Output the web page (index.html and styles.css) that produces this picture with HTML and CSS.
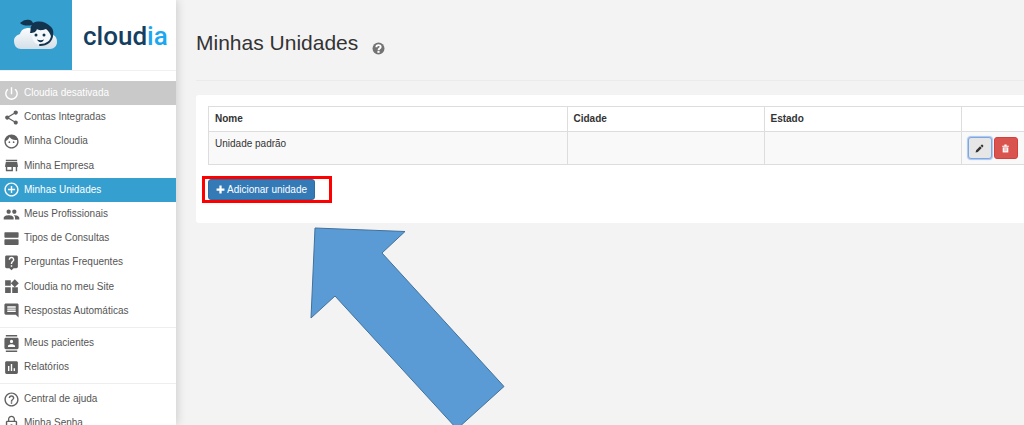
FILE: index.html
```
<!DOCTYPE html>
<html lang="pt-BR">
<head>
  <meta charset="UTF-8" />
  <meta name="viewport" content="width=device-width, initial-scale=1.0" />
  <title>Minhas Unidades</title>
  <link rel="stylesheet" href="styles.css">
</head>
<body>
  <aside class="sidebar">
    <a class="brand" href="#">
      <span class="brand-icon">
        <svg viewBox="0 0 72 72" aria-hidden="true">
          <defs>
            <linearGradient id="cloud" x1="0" y1="0" x2="0" y2="1">
              <stop offset="0" stop-color="#fff" />
              <stop offset="1" stop-color="#d3dfe8" />
            </linearGradient>
          </defs>
          <path fill="url(#cloud)" d="M21 49c-4 0-7-3-7-8 0-4 3-6 6-7 1-4 4-6 9-6 2 0 4 1 5 2 2-3 6-4 9-4 6 0 10 4 10 9 3 1 4 4 4 7 0 4-3 7-7 7z" />
          <path fill="#f4f8fb" d="M32 31l14-4 5 6c1 7-3 12-10 12-6 0-10-5-9-14z" />
          <path fill="#12344f" d="M30 33c1-3 0-6 2-8-4 1-9 1-12-2 2-1 3-3 6-3 3-1 6 0 7 3 6-3 13-1 17 3 4 3 4 8 2 12-2-4-3-7-6-9-5 2-8 1-9 0-1 3-3 4-7 4z" />
          <path fill="none" stroke="#12344f" stroke-width="2" stroke-linecap="round" d="M52 35c0 6-5 10-12 10" />
          <circle cx="36" cy="35" r="1.500" fill="#12344f" />
          <circle cx="44" cy="35" r="1.500" fill="#12344f" />
          <path fill="#12344f" d="M37 39.500c2 1 5 1 7 0-1 3-5 4-7 0z" />
        </svg>
      </span>
      <span class="brand-name">cloud<span class="brand-ia">ia</span></span>
    </a>

    <nav>
      <ul class="menu menu-main">
        <li><a class="off" href="#">
          <svg viewBox="0 0 24 24"><path d="M13 3h-2v10h2V3zm4.830 2.170l-1.420 1.420C17.990 7.860 19 9.810 19 12c0 3.870-3.130 7-7 7s-7-3.130-7-7c0-2.190 1.010-4.140 2.580-5.420L6.170 5.170C4.230 6.820 3 9.260 3 12c0 4.970 4.030 9 9 9s9-4.030 9-9c0-2.740-1.230-5.180-3.170-6.830z" /></svg>
          Cloudia desativada</a></li>
        <li><a href="#">
          <svg viewBox="0 0 24 24"><path d="M18 16.080c-.76 0-1.440.3-1.960.77L8.910 12.700c.05-.23.09-.46.09-.7s-.04-.47-.09-.7l7.050-4.110c.54.5 1.250.81 2.040.81 1.660 0 3-1.340 3-3s-1.340-3-3-3-3 1.340-3 3c0 .24.04.47.09.7L8.040 9.810C7.500 9.310 6.790 9 6 9c-1.660 0-3 1.340-3 3s1.340 3 3 3c.79 0 1.500-.31 2.040-.81l7.120 4.160c-.05.21-.08.43-.08.65 0 1.610 1.310 2.920 2.920 2.920s2.920-1.310 2.920-2.920-1.310-2.920-2.920-2.920z" /></svg>
          Contas Integradas</a></li>
        <li><a href="#">
          <svg viewBox="0 0 24 24"><path d="M9 11.750c-.69 0-1.250.56-1.250 1.250s.56 1.250 1.250 1.250 1.250-.56 1.250-1.250-.56-1.250-1.250-1.250zm6 0c-.69 0-1.250.56-1.250 1.250s.56 1.250 1.250 1.250 1.250-.56 1.250-1.250-.56-1.250-1.250-1.250zM12 2C6.480 2 2 6.480 2 12s4.480 10 10 10 10-4.480 10-10S17.520 2 12 2zm0 18c-4.410 0-8-3.590-8-8 0-.29.02-.58.05-.86 2.360-1.050 4.230-2.980 5.210-5.370C11.070 8.330 14.050 10 17.420 10c.78 0 1.530-.09 2.250-.26.21.71.33 1.470.33 2.260 0 4.410-3.590 8-8 8z" /></svg>
          Minha Cloudia</a></li>
        <li><a href="#">
          <svg viewBox="0 0 24 24"><path d="M20 4H4v2h16V4zm1 10v-2l-1-5H4l-1 5v2h1v6h10v-6h4v6h2v-6h1zm-9 4H6v-4h6v4z" /></svg>
          Minha Empresa</a></li>
        <li><a class="active" href="#">
          <svg viewBox="0 0 24 24"><path d="M13 7h-2v4H7v2h4v4h2v-4h4v-2h-4V7zm-1-5C6.480 2 2 6.480 2 12s4.480 10 10 10 10-4.480 10-10S17.520 2 12 2zm0 18c-4.410 0-8-3.590-8-8s3.590-8 8-8 8 3.590 8 8-3.590 8-8 8z" /></svg>
          Minhas Unidades</a></li>
        <li><a href="#">
          <svg viewBox="0 0 24 24"><path d="M16 11c1.660 0 2.990-1.340 2.990-3S17.660 5 16 5c-1.660 0-3 1.340-3 3s1.340 3 3 3zm-8 0c1.660 0 2.990-1.340 2.990-3S9.660 5 8 5C6.340 5 5 6.340 5 8s1.340 3 3 3zm0 2c-2.330 0-7 1.170-7 3.500V19h14v-2.500c0-2.330-4.670-3.500-7-3.500zm8 0c-.29 0-.62.02-.97.05 1.160.84 1.970 1.970 1.970 3.450V19h6v-2.500c0-2.330-4.670-3.500-7-3.500z" /></svg>
          Meus Profissionais</a></li>
        <li><a href="#">
          <svg viewBox="0 0 24 24"><path d="M21 13H3c-.55 0-1 .45-1 1v6c0 .55.45 1 1 1h18c.55 0 1-.45 1-1v-6c0-.55-.45-1-1-1zm0-10H3c-.55 0-1 .45-1 1v6c0 .55.45 1 1 1h18c.55 0 1-.45 1-1V4c0-.55-.45-1-1-1z" /></svg>
          Tipos de Consultas</a></li>
        <li><a href="#">
          <svg viewBox="0 0 24 24"><path d="M19 2H5c-1.110 0-2 .9-2 2v14c0 1.100.89 2 2 2h4l3 3 3-3h4c1.100 0 2-.9 2-2V4c0-1.100-.9-2-2-2zm-6 16h-2v-2h2v2zm2.070-7.750l-.9.920C13.450 11.900 13 12.500 13 14h-2v-.5c0-1.100.45-2.100 1.170-2.830l1.240-1.260c.37-.36.59-.86.59-1.410 0-1.100-.9-2-2-2s-2 .9-2 2H8c0-2.210 1.790-4 4-4s4 1.790 4 4c0 .88-.36 1.680-.93 2.250z" /></svg>
          Perguntas Frequentes</a></li>
        <li><a href="#">
          <svg viewBox="0 0 24 24"><path d="M13 13v8h8v-8h-8zM3 21h8v-8H3v8zM3 3v8h8V3H3zm13.660-1.310L11 7.340 16.660 13l5.660-5.660-5.660-5.650z" /></svg>
          Cloudia no meu Site</a></li>
        <li><a href="#">
          <svg viewBox="0 0 24 24"><path d="M21.990 4c0-1.100-.89-2-1.990-2H4c-1.100 0-2 .9-2 2v12c0 1.100.9 2 2 2h14l4 4-.01-18zM18 14H6v-2h12v2zm0-3H6V9h12v2zm0-3H6V6h12v2z" /></svg>
          Respostas Automáticas</a></li>
      </ul>
      <ul class="menu">
        <li><a href="#">
          <svg viewBox="0 0 24 24"><path d="M20 0H4v2h16V0zM4 24h16v-2H4v2zM20 4H4c-1.100 0-2 .9-2 2v12c0 1.100.9 2 2 2h16c1.100 0 2-.9 2-2V6c0-1.100-.9-2-2-2zm-8 2.750c1.240 0 2.250 1.010 2.250 2.250s-1.010 2.250-2.250 2.250S9.750 10.240 9.750 9 10.760 6.750 12 6.750zM17 17H7v-1.500c0-1.670 3.330-2.500 5-2.500s5 .83 5 2.500V17z" /></svg>
          Meus pacientes</a></li>
        <li><a href="#">
          <svg viewBox="0 0 24 24"><path d="M19 3H5c-1.100 0-2 .9-2 2v14c0 1.100.9 2 2 2h14c1.100 0 2-.9 2-2V5c0-1.100-.9-2-2-2zM9 17H7v-7h2v7zm4 0h-2V7h2v10zm4 0h-2v-4h2v4z" /></svg>
          Relatórios</a></li>
      </ul>
      <ul class="menu">
        <li><a href="#">
          <svg viewBox="0 0 24 24"><path d="M11 18h2v-2h-2v2zm1-16C6.480 2 2 6.480 2 12s4.480 10 10 10 10-4.480 10-10S17.520 2 12 2zm0 18c-4.410 0-8-3.590-8-8s3.590-8 8-8 8 3.590 8 8-3.590 8-8 8zm0-14c-2.210 0-4 1.790-4 4h2c0-1.100.9-2 2-2s2 .9 2 2c0 2-3 1.750-3 5h2c0-2.250 3-2.500 3-5 0-2.210-1.790-4-4-4z" /></svg>
          Central de ajuda</a></li>
        <li><a href="#">
          <svg viewBox="0 0 24 24"><path d="M12 17c1.100 0 2-.9 2-2s-.9-2-2-2-2 .9-2 2 .9 2 2 2zm6-9h-1V6c0-2.760-2.240-5-5-5S7 3.240 7 6v2H6c-1.100 0-2 .9-2 2v10c0 1.100.9 2 2 2h12c1.100 0 2-.9 2-2V10c0-1.100-.9-2-2-2zM8.900 6c0-1.710 1.390-3.100 3.100-3.100s3.100 1.390 3.100 3.100v2H8.900V6zM18 20H6V10h12v10z" /></svg>
          Minha Senha</a></li>
      </ul>
    </nav>
  </aside>

  <main class="content">
    <header class="page-header">
      <h1>Minhas Unidades</h1>
      <button class="help" type="button" aria-label="Ajuda">
        <svg viewBox="0 0 24 24"><circle cx="12" cy="12" r="11" fill="#737373" /><path fill="none" stroke="#fff" stroke-width="3.500" d="M8 9.500c0-5 8-5 8-.5 0 3-4 2.500-4 6" /><path fill="#fff" d="M10 16.500h4V20h-4z" /></svg>
      </button>
    </header>

    <section class="card">
      <table class="units">
        <thead>
          <tr>
            <th>Nome</th>
            <th class="col-place">Cidade</th>
            <th class="col-place">Estado</th>
            <th class="col-actions"></th>
          </tr>
        </thead>
        <tbody>
          <tr>
            <td>Unidade padrão</td>
            <td></td>
            <td></td>
            <td>
              <div class="actions">
                <button class="btn btn-edit" type="button" aria-label="Editar">
                  <svg viewBox="0 0 16 16"><path fill="#333" d="M1 15l1-4 7-7 3 3-7 7zM10 3l1.500-1.500q1-1 2 0l1 1q1 1 0 2L13 6z" /></svg>
                </button>
                <button class="btn btn-delete" type="button" aria-label="Excluir">
                  <svg viewBox="0 0 16 16"><path fill="#fff" d="M2 3h4V1h4v2h4v2H2z" /><path fill="#fff" d="M3 6h10v9H3z" /><path stroke="#e9908d" d="M6 7v6M8 7v6M10 7v6" /></svg>
                </button>
              </div>
            </td>
          </tr>
        </tbody>
      </table>
      <div class="add">
        <button class="btn btn-add" type="button">
          <svg viewBox="0 0 16 16"><path fill="#fff" d="M6 1h4v5h5v4h-5v5H6v-5H1V6h5z" /></svg>
          Adicionar unidade
        </button>
        <span class="highlight"></span>
        <svg class="arrow" viewBox="0 0 196 206" aria-hidden="true">
          <path fill="#5b9bd5" stroke="#41719c" d="M5 2L95 5.500 72 27 194 160.500 147 203 25 70 1 92z" />
        </svg>
      </div>
    </section>
  </main>
</body>
</html>
```
FILE: styles.css
```
* {
  box-sizing: border-box;
}
body {
  margin: 0;
  height: 100vh;
  display: flex;
  overflow: hidden;
  background-color: #f3f3f3;
  color: #333;
  font-family: "Liberation Sans", Arial, sans-serif;
  font-size: 10px;
  line-height: 14px;
}
button {
  font: inherit;
  cursor: pointer;
}

/* sidebar */
.sidebar {
  flex: 0 0 176px;
  background: #fff;
  box-shadow: 0 0 10px rgba(0, 0, 0, 0.2);
}
.brand {
  display: flex;
  height: 71px;
  margin-bottom: 10px;
  border-bottom: 1px solid #f0f0f0;
  text-decoration: none;
}
.brand-icon {
  width: 72px;
  background: #359fd0;
}
.brand-icon svg {
  display: block;
  width: 72px;
}
.brand-name {
  flex: 1;
  padding-left: 11px;
  color: #153f61;
  font-family: Roboto, sans-serif;
  font-size: 26px;
  font-weight: 500;
  line-height: 72px;
}
.brand-ia {
  color: #1ba8f0;
}
.menu {
  list-style: none;
  margin: 0;
  padding: 3px 0 4px;
  border-bottom: 1px solid #eee;
}
.menu-main {
  display: grid;
  grid-auto-rows: 1fr;
  min-height: 247px;
  padding-top: 0;
}
.menu a {
  display: flex;
  align-items: center;
  gap: 4px;
  height: 100%;
  min-height: 24px;
  padding-left: 3px;
  color: #555;
  text-decoration: none;
}
.menu svg {
  width: 17px;
  height: 17px;
  fill: #606060;
}
.menu .off {
  background: #c9c9c9;
  color: #fff;
}
.menu .active {
  background: #359fd0;
  color: #fff;
}
.menu .off svg,
.menu .active svg {
  fill: #fff;
}

/* content */
.content {
  flex: 1;
  min-width: 0;
  padding-left: 20px;
}
.page-header {
  display: flex;
  align-items: center;
  gap: 14px;
  height: 81px;
  padding-top: 6px;
  border-bottom: 1px solid #ebebeb;
}
.page-header h1 {
  margin: 0;
  font-size: 21px;
  font-weight: normal;
}
.help {
  padding: 10px 0 0;
  border: 0;
  background: none;
}
.help svg {
  display: block;
  width: 13px;
}
.card {
  margin-top: 14px;
  padding: 11px 0 23px 12px;
  border-radius: 3px 0 0 3px;
  background: #fff;
}
.units {
  width: 100%;
  table-layout: fixed;
  border-collapse: collapse;
}
.units th,
.units td {
  border: 1px solid #ddd;
  border-right: 0;
  padding: 5px 6px;
  text-align: left;
  vertical-align: top;
}
.units td {
  background: #f9f9f9;
}
.col-place {
  width: 197px;
}
.units .col-actions {
  width: 63px;
}
.actions {
  display: flex;
  gap: 2px;
}
.btn {
  border: 1px solid transparent;
  border-radius: 3px;
}
.btn-edit,
.btn-delete {
  display: flex;
  align-items: center;
  justify-content: center;
  width: 24px;
  height: 22px;
  padding: 0;
}
.btn svg {
  width: 9px;
  height: 9px;
}
.btn-edit {
  background: #e6e6e6;
  border-color: #7da7e0;
  box-shadow: 0 0 1px 1px #a9c5ee;
}
.btn-delete {
  background: #d9534f;
  border-color: #d43f3a;
}
.add {
  position: relative;
  margin-top: 14px;
}
.btn-add {
  display: flex;
  align-items: center;
  gap: 2px;
  height: 21px;
  padding: 0 7px;
  background: #337ab7;
  border-color: #2e6da4;
  color: #fff;
}

/* marks over the page */
.highlight {
  position: absolute;
  top: -3px;
  left: -6px;
  width: 130px;
  height: 27px;
  border: 3px solid #f00;
}
.arrow {
  position: absolute;
  top: 47px;
  left: 102px;
  width: 196px;
  height: 206px;
}
```
